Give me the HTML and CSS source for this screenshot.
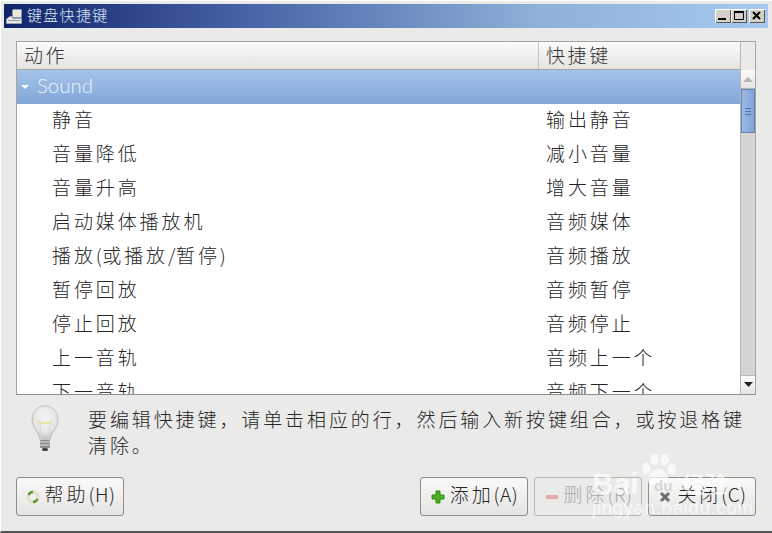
FILE: index.html
```html
<!DOCTYPE html>
<html lang="zh">
<head>
<meta charset="utf-8">
<title>键盘快捷键</title>
<link rel="stylesheet" href="styles.css">
</head>
<body>
<div class="window">
  <div class="titlebar">
    <svg class="app-icon" width="16" height="16" viewBox="0 0 16 16"><rect x="6.500" y="1.500" width="9" height="8" rx="1" fill="#ece9d8" stroke="#8d97ad"/><path d="M.5 15.500V11L4 8.500H6.500V10.500H15.500V15.500Z" fill="#e9e9e6" stroke="#9aa4b8"/><rect x="2" y="12" width="12" height="1" fill="#9b9b98"/></svg>
    <span class="title-text">键盘快捷键</span>
    <div class="win-buttons">
      <span class="win-btn"><svg width="16" height="14" viewBox="0 0 16 14"><rect x="3" y="9" width="8" height="2" fill="#000"/></svg></span>
      <span class="win-btn"><svg width="16" height="14" viewBox="0 0 16 14"><path d="M3.500 2.500H12.500V10.500H3.500Z" fill="none" stroke="#000"/><rect x="3" y="2" width="10" height="2" fill="#000"/></svg></span>
      <span class="win-btn close"><svg width="16" height="14" viewBox="0 0 16 14"><path d="M4 3L11 10M11 3L4 10" stroke="#000" stroke-width="2"/></svg></span>
    </div>
  </div>
  <div class="content">
    <div class="tree">
      <div class="tree-main">
        <div class="tree-head">
          <div class="col-action head-cell">动作</div>
          <div class="col-key head-cell sep">快捷键</div>
        </div>
        <div class="group-row">
          <svg class="expander" width="9" height="6" viewBox="0 0 9 6"><path d="M0 1H8L4 5Z" fill="#fff"/></svg>
          <span>Sound</span>
        </div>
        <div class="rows">
          <div class="row"><div class="col-action cell">静音</div><div class="col-key cell">输出静音</div></div>
          <div class="row"><div class="col-action cell">音量降低</div><div class="col-key cell">减小音量</div></div>
          <div class="row"><div class="col-action cell">音量升高</div><div class="col-key cell">增大音量</div></div>
          <div class="row"><div class="col-action cell">启动媒体播放机</div><div class="col-key cell">音频媒体</div></div>
          <div class="row"><div class="col-action cell">播放<span class="lat">(</span>或播放<span class="lat">/</span>暂停<span class="lat">)</span></div><div class="col-key cell">音频播放</div></div>
          <div class="row"><div class="col-action cell">暂停回放</div><div class="col-key cell">音频暂停</div></div>
          <div class="row"><div class="col-action cell">停止回放</div><div class="col-key cell">音频停止</div></div>
          <div class="row"><div class="col-action cell">上一音轨</div><div class="col-key cell">音频上一个</div></div>
          <div class="row"><div class="col-action cell">下一音轨</div><div class="col-key cell">音频下一个</div></div>
        </div>
      </div>
      <div class="scrollbar">
        <div class="scroll-corner"></div>
        <div class="scroll-btn"><svg width="11" height="6" viewBox="0 0 11 6"><path d="M0 6H10L5 1Z" fill="#b5b5b5"/></svg></div>
        <div class="scroll-track">
          <div class="scroll-thumb"><i></i><i></i><i></i></div>
        </div>
        <div class="scroll-btn bottom"><svg width="11" height="6" viewBox="0 0 11 6"><path d="M1 0H10L5.500 5Z" fill="#222"/></svg></div>
      </div>
    </div>
    <div class="hint">
      <svg class="bulb" width="34" height="48" viewBox="0 0 34 48">
        <defs><radialGradient id="glass" cx="50%" cy="35%" r="60%"><stop offset="0" stop-color="#f4f4f2"/><stop offset=".7" stop-color="#e6e6e4"/><stop offset="1" stop-color="#c4c6c4"/></radialGradient></defs>
        <path d="M17 1C9 1 4 7 4 15C4 23 11 27 12 35H22C23 27 30 23 30 15C30 7 25 1 17 1Z" fill="url(#glass)" stroke="#c2c4c2"/>
        <path d="M10 16C13 19 21 19 24 16" fill="none" stroke="#e6e08c" stroke-width="1.500"/>
        <path d="M14 35L12 18M20 35L22 18" fill="none" stroke="#d6d7d5"/>
        <rect x="12" y="35" width="10" height="8" rx="1" fill="#8a8c8a"/>
        <path d="M12 37H22M12 40H22" stroke="#e2e2e2"/>
        <rect x="14" y="43" width="6" height="3" rx="1.500" fill="#444"/>
      </svg>
      <p class="hint-text">要编辑快捷键，请单击相应的行，然后输入新按键组合，或按退格键清除。</p>
    </div>
    <div class="actions">
      <button class="btn" type="button"><svg width="16" height="16" viewBox="0 0 16 16"><circle cx="8" cy="8" r="5" fill="none" stroke="#e4e0c4" stroke-width="3"/><path d="M3.500 6A5 5 0 0 1 8 3M12.500 10A5 5 0 0 1 8 13" fill="none" stroke="#5c9a33" stroke-width="2.500"/></svg><span class="btn-label">帮助<span class="lat">(H)</span></span></button>
      <div class="actions-right">
        <button class="btn" type="button"><svg width="16" height="16" viewBox="0 0 16 16"><path d="M6 2H10V6H14V10H10V14H6V10H2V6H6Z" fill="#4cae22" stroke="#2c8a10"/></svg><span class="btn-label">添加<span class="lat">(A)</span></span></button>
        <button class="btn disabled" type="button"><svg width="16" height="16" viewBox="0 0 16 16"><rect x="2" y="6" width="12" height="4" rx="1" fill="#e8a8a8"/></svg><span class="btn-label">删除<span class="lat">(R)</span></span></button>
        <button class="btn" type="button"><svg width="16" height="16" viewBox="0 0 16 16"><path d="M4 4L12 12M12 4L4 12" stroke="#6e6e6e" stroke-width="3"/></svg><span class="btn-label">关闭<span class="lat">(C)</span></span></button>
      </div>
    </div>
  </div>
  <div class="watermark">
    <svg width="40" height="42" viewBox="0 0 66 62"><g fill="#fff"><ellipse cx="14" cy="27" rx="7" ry="10"/><ellipse cx="27" cy="12" rx="7" ry="10"/><ellipse cx="44" cy="12" rx="7" ry="10"/><ellipse cx="56" cy="28" rx="7" ry="10"/><path d="M34 27C44 27 54 42 50 50C46 57 38 52 34 52C29 52 20 57 17 50C13 42 24 27 34 27Z"/></g></svg>
    <span class="wm-bai">Bai</span><span class="wm-du">du</span><span class="wm-jy">经验</span>
    <span class="wm-url">jingyan.baidu.com</span>
  </div>
</div>
</body>
</html>
```
FILE: styles.css
```css
* { box-sizing: border-box; }
html, body { margin: 0; padding: 0; }
body { width: 772px; height: 533px; overflow: hidden; background: #eaeae9; font-family: "Noto Sans CJK SC", "Liberation Sans", sans-serif; color: #333; }
.window { position: relative; width: 772px; height: 533px; display: flex; flex-direction: column; padding: 3px 4px 0 3px; border-top: 1px solid #fff; border-left: 1px solid #fff; border-bottom: 2px solid #555; background: #eaeae9; }
.titlebar { flex: none; height: 24px; display: flex; align-items: center; padding: 0 3px 0 2px; background: linear-gradient(90deg, #10246a 0%, #4a66a8 33%, #8fb0d8 70%, #a6c9ef 100%); }
.app-icon { flex: none; }
.title-text { margin-left: 5px; font-size: 15px; letter-spacing: 1.300px; color: #dfe6f2; line-height: 22px; height: 24px; font-weight: 300; }
.win-buttons { margin-left: auto; display: flex; }
.win-btn { width: 16px; height: 14px; background: #d4d0c8; box-shadow: inset 1px 1px 0 #fff, inset -1px -1px 0 #555; display: flex; }
.win-btn.close { margin-left: 2px; }
.content { flex: 1; display: flex; flex-direction: column; padding: 13px 12px 0 12px; }
.tree { flex: none; height: 354px; display: flex; border: 1px solid #a5a4a2; border-bottom-color: #8f8e8c; background: #fff; overflow: hidden; }
.tree-main { flex: 1; min-width: 0; display: flex; flex-direction: column; }
.tree-head { flex: none; height: 28px; display: flex; background: linear-gradient(#fbfbfa, #e4e3e1); border-bottom: 1px solid #a5a4a2; }
.col-action { width: 521px; flex: none; }
.col-key { flex: 1; }
.head-cell { font-size: 19px; letter-spacing: 2.600px; line-height: 25px; padding-left: 7px; color: #333; font-weight: 300; }
.head-cell.sep { border-left: 1px solid #c4c3c1; }
.group-row { flex: none; height: 34px; display: flex; align-items: center; padding: 0 0 4px 4px; background: linear-gradient(#a4c3e9, #82a7d8); color: #eef4fb; font-family: "Lato", "Liberation Sans", sans-serif; font-size: 20.500px; font-weight: 300; }
.expander { margin: 4px 7px 0 0; flex: none; }
.rows { flex: 1; overflow: hidden; }
.row { height: 34px; display: flex; align-items: flex-start; }
.cell { font-size: 19px; letter-spacing: 2.900px; white-space: nowrap; line-height: 30px; color: #262626; font-weight: 300; }
.col-action.cell { padding-left: 35px; }
.col-key.cell { padding-left: 8px; }
.lat { letter-spacing: .5px; }
.scrollbar { flex: none; width: 15px; display: flex; flex-direction: column; background: #d5d4d2; border-left: 1px solid #b8b7b5; }
.scroll-corner { flex: none; height: 28px; background: #eaeae9; }
.scroll-btn { flex: none; height: 19px; background: linear-gradient(#fbfbfa, #e6e5e3); border-bottom: 1px solid #b8b7b5; display: flex; align-items: center; justify-content: center; }
.scroll-btn.bottom { border-bottom: 0; border-top: 1px solid #b8b7b5; }
.scroll-track { flex: 1; }
.scroll-thumb { height: 44px; background: linear-gradient(90deg, #9bbbe4, #7fa3d6); border: 1px solid #5d84bb; display: flex; flex-direction: column; align-items: center; justify-content: center; gap: 2px; }
.scroll-thumb i { display: block; width: 6px; height: 1px; background: #4f76ae; }
.hint { flex: none; display: flex; height: 70px; padding-top: 11px; }
.bulb { flex: none; margin: -1px 0 0 12px; }
.hint-text { margin: 0 0 0 26px; width: 668px; font-size: 19px; letter-spacing: 2.900px; line-height: 26px; color: #262626; font-weight: 300; }
.actions { flex: none; display: flex; justify-content: space-between; padding-top: 12px; }
.actions-right { display: flex; gap: 6px; }
.btn { width: 108px; height: 39px; display: flex; align-items: center; justify-content: center; gap: 4px; padding: 0; background: linear-gradient(#f9f9f8, #e5e4e2); border: 1px solid #8f8e8c; border-radius: 3px; font-family: inherit; font-size: 19px; letter-spacing: 2.900px; color: #262626; font-weight: 300; }
.btn-label { padding-bottom: 6px; }
.btn.disabled { color: #aaa; border-color: #b5b4b2; background: #eaeae9; }
.watermark { position: absolute; left: -1px; top: -1px; width: 772px; height: 533px; pointer-events: none; opacity: .68; }
.watermark svg { position: absolute; left: 638px; top: 450px; }
.wm-bai, .wm-du, .wm-jy, .wm-url { position: absolute; color: #fff; font-family: "Liberation Sans", sans-serif; }
.wm-bai { left: 592px; top: 467px; font-size: 30px; font-weight: 700; }
.wm-du { left: 654px; top: 477px; font-size: 15px; font-weight: 700; color: #c8c8c8; }
.wm-jy { left: 682px; top: 466px; font-size: 23px; font-family: "Noto Sans CJK SC", sans-serif; font-weight: 700; }
.wm-url { left: 592px; top: 497px; font-size: 19px; letter-spacing: .5px; }
```
